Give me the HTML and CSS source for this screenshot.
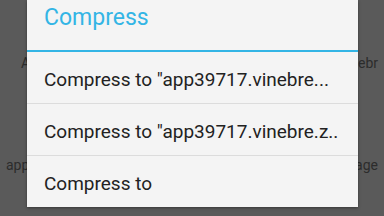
FILE: index.html
```html
<!DOCTYPE html>
<html lang="en">
<head>
    <meta charset="UTF-8">
    <meta name="viewport" content="width=device-width, initial-scale=1.0">
    <title>Compress</title>
    <link rel="stylesheet" href="styles.css">
</head>
<body>
    <div class="screen">
        <div class="bg-row row-one">
            <span>Apk</span>
            <span>vinebr</span>
        </div>
        <div class="bg-row row-two">
            <span>app</span>
            <span>age</span>
        </div>
    </div>

    <div class="dialog">
        <h1 class="dialog-title">Compress</h1>
        <ul class="options">
            <li class="option">Compress to "app39717.vinebre...</li>
            <li class="option">Compress to "app39717.vinebre.z..</li>
            <li class="option">Compress to</li>
        </ul>
    </div>
</body>
</html>
```

FILE: styles.css
```css
body {
    margin: 0;
    width: 384px;
    height: 216px;
    overflow: hidden;
    background-color: #5a5a5a;
    font-family: Roboto, "Noto Sans", sans-serif;
    position: relative;
}

.screen {
    display: flex;
    flex-direction: column;
    height: 216px;
}

.bg-row {
    display: flex;
    justify-content: space-between;
    font-size: 14px;
    color: #2c2c2c;
}

.row-one {
    padding: 55px 6px 0 21px;
}

.row-two {
    padding: 86px 6px 0 6px;
}

.dialog {
    position: absolute;
    left: 27px;
    top: 0;
    width: 331px;
    height: 207px;
    background-color: #f4f4f4;
    box-shadow: 0 1px 3px rgba(0, 0, 0, 0.4);
}

.dialog-title {
    margin: 0;
    padding: 3px 0 17px 17px;
    font-size: 23px;
    line-height: 30px;
    font-weight: normal;
    color: #33b5e5;
    border-bottom: 2px solid #33b5e5;
}

.options {
    list-style: none;
    margin: 0;
    padding: 0;
}

.option {
    padding: 4px 0 0 17px;
    font-size: 19px;
    line-height: 47px;
    color: #222;
    white-space: nowrap;
    border-bottom: 1px solid #dcdcdc;
}

.option:last-child {
    border-bottom: none;
}
```
